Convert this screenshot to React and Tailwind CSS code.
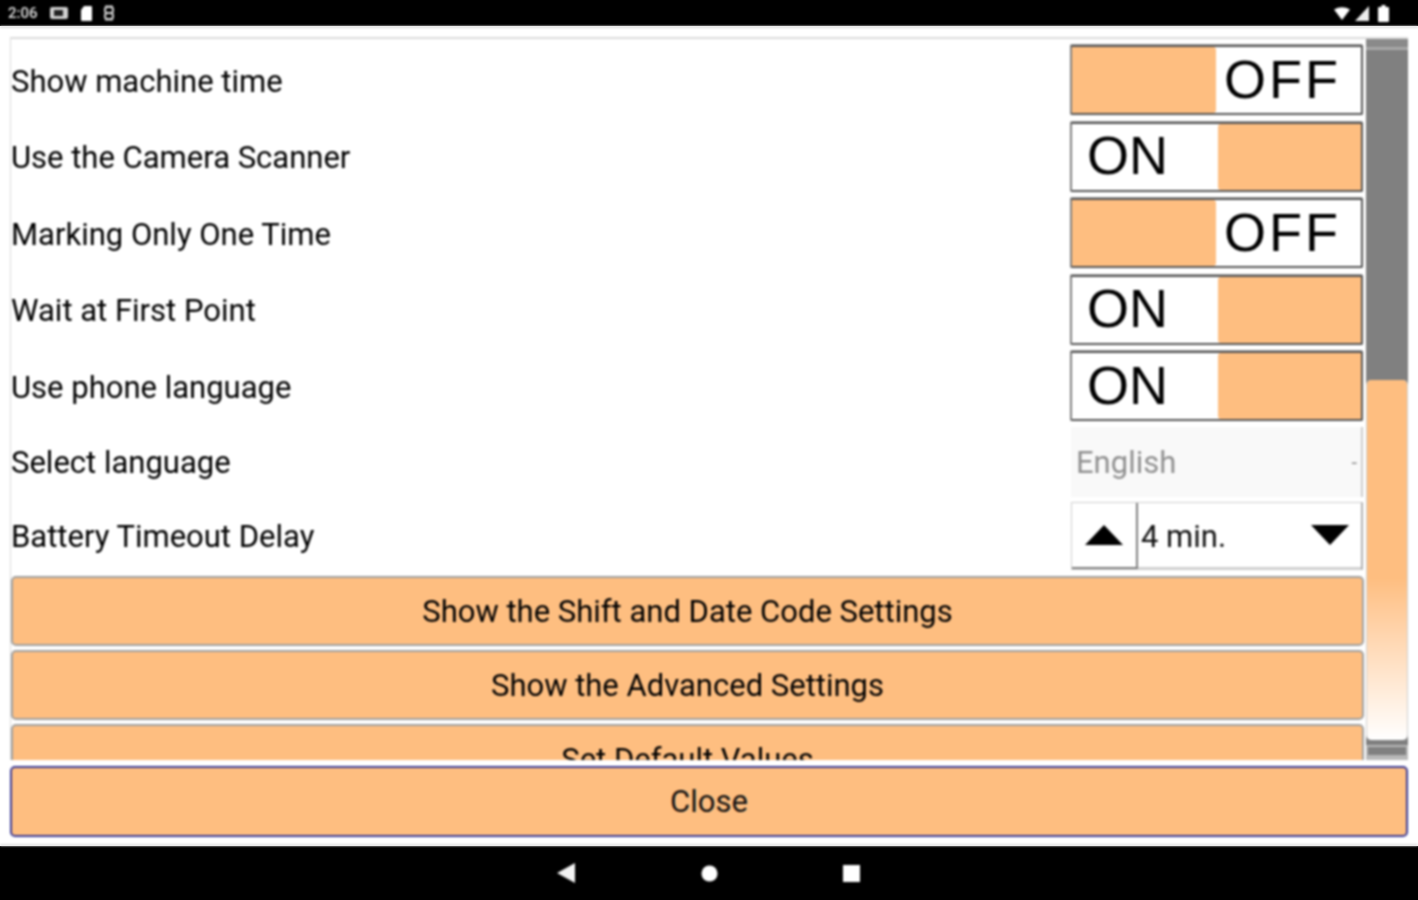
const font = { fontFamily: 'Roboto, "Noto Sans", sans-serif' };
const toggleFont = { fontFamily: '"Liberation Sans", sans-serif' };

function Toggle({ on }) {
  return (
    <div className="flex h-[70px] w-[293px] rounded-[2px] border-2 border-[#555555] border-l-[#808080] bg-white shadow-[0_-1px_0_#a0a0a0]">
      {on ? (
        <>
          <div className="flex w-[146px] items-center pb-[3px] pl-[15px] text-[54px] leading-none text-black" style={toggleFont}>ON</div>
          <div className="flex-1 rounded-l-[3px] bg-[#febe80]" />
        </>
      ) : (
        <>
          <div className="w-[144px] rounded-r-[3px] bg-[#febe80]" />
          <div className="flex flex-1 items-center pb-[3px] pl-[8px] text-[54px] leading-none tracking-[3px] text-black" style={toggleFont}>OFF</div>
        </>
      )}
    </div>
  );
}

function Row({ label, children, h = "h-[76.5px]", labelClass = "mt-[2px]" }) {
  return (
    <div className={`flex items-center justify-between pr-[2px] ${h}`}>
      <span className={`${labelClass} text-[31px] leading-none text-[#000000]`}>{label}</span>
      {children}
    </div>
  );
}

function OrangeButton({ children }) {
  return (
    <div className="flex h-[70px] items-center justify-center rounded-[5px] border-2 border-[#a0a0a0] bg-[#febe80] pt-[2px] text-[31px] leading-none text-black">
      {children}
    </div>
  );
}

export default function App() {
  return (
    <div className="flex h-[900px] w-[1418px] flex-col overflow-hidden bg-white" style={font}>
      <div className="h-[26px] shrink-0 bg-black">
        <div className="flex h-full items-center justify-between pl-[8px] pr-[29px] blur-[0.8px]">
          <div className="flex items-center gap-[10px]">
            <span className="text-[15px] font-medium leading-none text-[#e0e0e0]">2:06</span>
            <svg width="22" height="16" viewBox="0 0 22 16" fill="none">
              <rect x="2" y="2" width="18" height="12" rx="2" fill="#d0d0d0" />
              <rect x="6" y="5" width="9" height="6" fill="#222" />
            </svg>
            <svg width="12" height="16" viewBox="0 0 12 16" fill="#ffffff">
              <path d="M4 1h7a1 1 0 0 1 1 1v13a1 1 0 0 1-1 1H2a1 1 0 0 1-1-1V5z" />
            </svg>
            <svg width="14" height="16" viewBox="0 0 14 16" fill="none" stroke="#d0d0d0" strokeWidth="2">
              <path d="M3 1.5h8M3 8h8M3 14.5h8" />
              <rect x="3" y="2" width="8" height="6" rx="2.5" />
              <rect x="3" y="8" width="8" height="6" rx="2.5" />
            </svg>
          </div>
          <div className="flex items-center gap-[5px]">
            <svg width="16" height="13" viewBox="0 0 16 13" fill="#fff"><path d="M0 2.5 Q8 -2 16 2.5 L8 13z" /></svg>
            <svg width="14" height="15" viewBox="0 0 14 15" fill="#eeeeee"><path d="M14 0v15H0z" /></svg>
            <svg width="11" height="17" viewBox="0 0 11 17" fill="#fff" className="ml-[4px]"><path d="M3.5 0h4v2H10a1 1 0 0 1 1 1v13a1 1 0 0 1-1 1H1a1 1 0 0 1-1-1V3a1 1 0 0 1 1-1h2.5z" /></svg>
          </div>
        </div>
      </div>

      <div className="flex min-h-0 flex-1 flex-col border-y-[2px] border-[#dedede] px-[10px] pb-[8px] pt-[9px] blur-[0.8px]">
        <div className="flex h-[723px] shrink-0 overflow-hidden border-l border-t-[2px] border-[#dcdcdc]">
          <div className="flex h-[800px] w-[1354px] shrink-0 flex-col pt-[3px]">
            <Row label="Show machine time"><Toggle /></Row>
            <Row label="Use the Camera Scanner"><Toggle on /></Row>
            <Row label="Marking Only One Time"><Toggle /></Row>
            <Row label="Wait at First Point"><Toggle on /></Row>
            <Row label="Use phone language"><Toggle on /></Row>
            <Row label="Select language" h="h-[75px]" labelClass="mt-0">
              <div className="flex h-[70px] w-[292px] items-center justify-between border-r-2 border-[#cccccc] bg-[#f9f9f9] pl-[5px] pr-[4px] text-[31px] leading-none text-[#909090]">
                <span>English</span>
                <span className="text-[20px]">-</span>
              </div>
            </Row>
            <Row label="Battery Timeout Delay" h="h-[73px]" labelClass="mt-0">
              <div className="flex h-[68px] w-[292px] border border-r-2 border-[#d0d0d0] border-r-[#b0b0b0] bg-white text-[31px] leading-none text-[#111111]">
                <div className="flex w-[66px] shrink-0 items-center justify-center border-b-2 border-r-2 border-[#808080]">
                  <svg width="38" height="20" viewBox="0 0 38 20" fill="#000"><path d="M19 0 38 20H0z" /></svg>
                </div>
                <div className="flex flex-1 items-center justify-between border-b-2 border-[#d0d0d0] pl-[3px] pr-[12px]">
                  <span className="pt-[2px]">4 min.</span>
                  <svg width="38" height="20" viewBox="0 0 38 20" fill="#000"><path d="M0 0h38L19 20z" /></svg>
                </div>
              </div>
            </Row>
            <div className="mt-[3px] flex flex-col gap-[4px] pr-[1px]">
              <OrangeButton>Show the Shift and Date Code Settings</OrangeButton>
              <OrangeButton>Show the Advanced Settings</OrangeButton>
              <OrangeButton>Set Default Values</OrangeButton>
            </div>
          </div>
          <div className="ml-[1px] flex w-[42px] shrink-0 flex-col bg-[#808080]">
            <div className="h-[11px] shrink-0 border-b-[3px] border-[#a8a8a8] bg-[#8a8a8a]" />
            <div className="h-[330px] shrink-0" />
            <div className="h-[360px] shrink-0 rounded-[5px] border-x border-[#d0d0d0] bg-gradient-to-b from-[#febe80] from-[55%] to-white" />
            <div className="flex-1 border-t-[5px] border-[#7f7f7f] bg-[#b8b8b8] pt-[2px]"><div className="mx-[2px] h-[8px] bg-[#808080]" /></div>
          </div>
        </div>
        <div className="mt-[6px] flex h-[71px] shrink-0 items-center justify-center rounded-[5px] border-2 border-[#3c3c96] bg-[#febe80] text-[31px] leading-none text-[#111111]">
          Close
        </div>
      </div>

      <div className="h-[54px] shrink-0 bg-black">
        <div className="flex h-full items-center justify-center pr-[1px] blur-[0.8px]">
          <svg width="18" height="20" viewBox="0 0 18 20" fill="#f4f4f4" className="mr-[126px]"><path d="M18 0v20L0 10z" /></svg>
          <svg width="17" height="17" viewBox="0 0 18 18" fill="#fff" className="mr-[125px]"><circle cx="9" cy="9" r="8.5" /></svg>
          <svg width="17" height="17" viewBox="0 0 18 18" fill="#fff"><rect width="18" height="18" /></svg>
        </div>
      </div>
    </div>
  );
}
